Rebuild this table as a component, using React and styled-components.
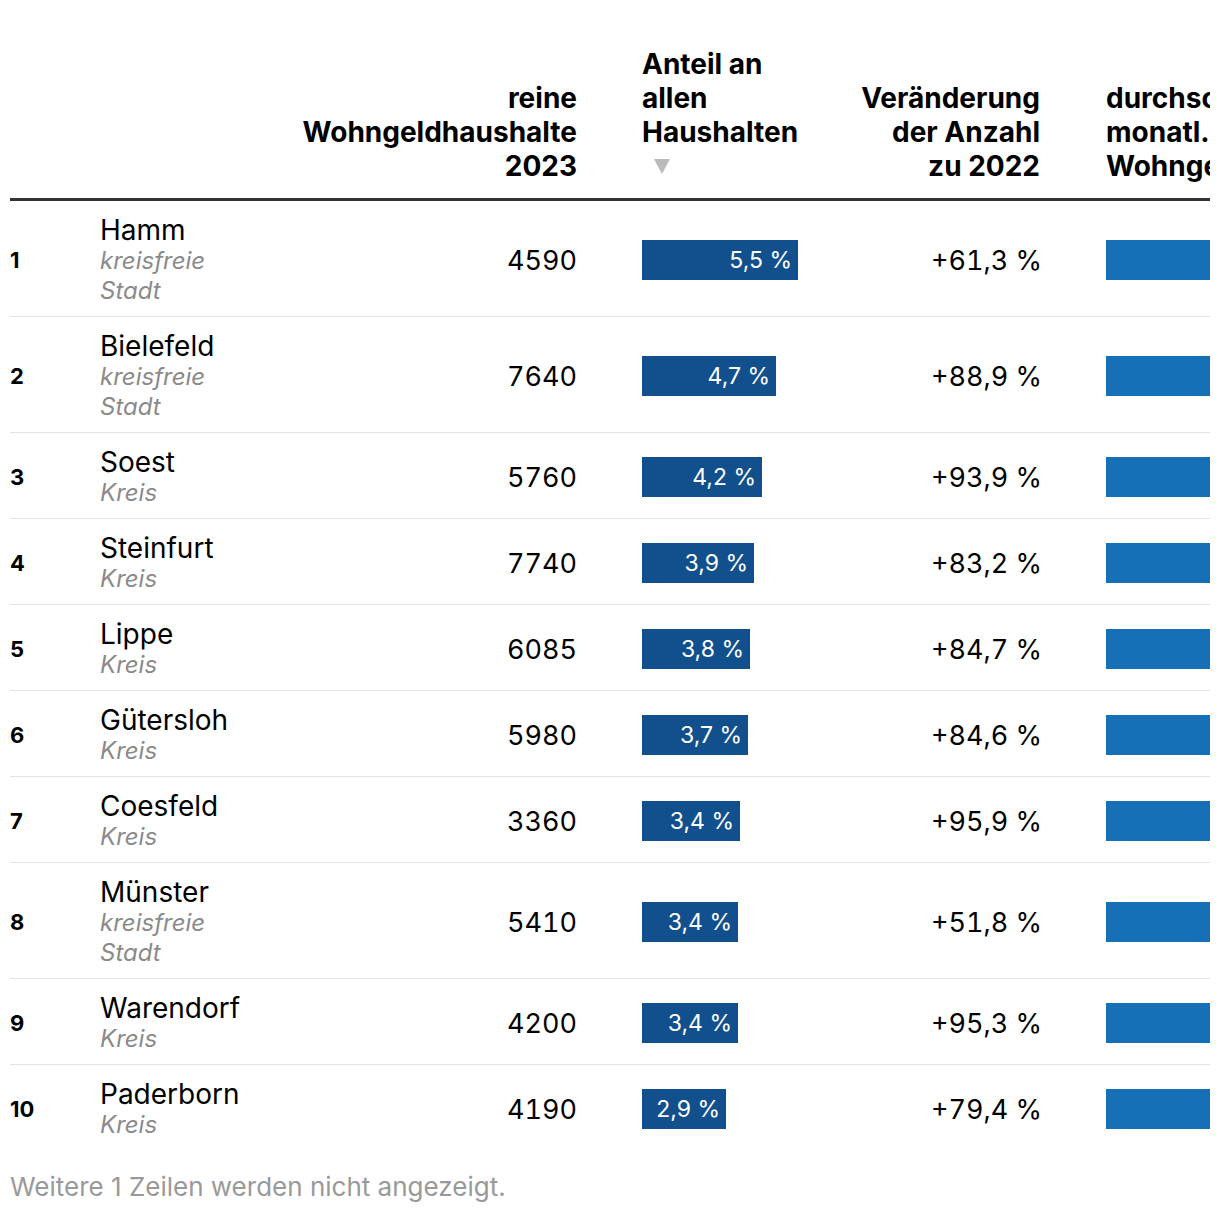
import React from "react"
import styled, { createGlobalStyle } from "styled-components"

const GlobalStyle = createGlobalStyle`
  body {
    margin: 0;
    background: #fff;
    font-family: Inter, "Noto Sans", sans-serif;
    color: #000;
  }
`;

// column template shared by header and rows
const cols = "90px 180px 297px 223px 240px 230px";

const Wrap = styled.div`
  width: 1200px;
  margin: 0 10px;
  padding-top: 47px;
  overflow: hidden;
`;

const Table = styled.div`
  width: 1260px;
`;

const HeadRow = styled.div`
  display: grid;
  grid-template-columns: ${cols};
  align-items: end;
  padding-bottom: 15px;
  border-bottom: 3px solid #333;
`;

const Th = styled.div`
  font-size: 28px;
  font-weight: 700;
  line-height: 34px;
  text-align: ${({align}) => align || "left"};
  padding-left: ${({pl}) => pl || 0}px;
`;

const SortArrow = styled.div`
  height: 34px;
  display: flex;
  align-items: center;
  padding-left: 12px;

  &::before {
    content: "";
    border-left: 8px solid transparent;
    border-right: 8px solid transparent;
    border-top: 15px solid #bbb;
  }
`;

const Row = styled.div`
  display: grid;
  grid-template-columns: ${cols};
  align-items: center;
  padding: 13px 0 10px;
  border-bottom: ${({last}) => last ? "none" : "1px solid #e3e3e3"};
`;

const Rank = styled.div`
  font-size: 22px;
  font-weight: 700;
`;

const Name = styled.div`
  font-size: 28px;
  line-height: 32px;
`;

const Sub = styled.div`
  font-size: 24px;
  line-height: 30px;
  font-style: italic;
  color: #8a8a8a;
`;

const Num = styled.div`
  font-size: 27px;
  text-align: right;
  font-variant-numeric: tabular-nums;
`;

const BarCell = styled.div`
  padding-left: 65px;
`;

const Bar = styled.div`
  height: 40px;
  background: #11508c;
  color: #fff;
  font-size: 23px;
  display: flex;
  align-items: center;
  justify-content: flex-end;
  padding-right: 6px;
  box-sizing: border-box;
`;

const Change = styled(Num)`
  padding-left: 40px;
  margin-right: -2px;
`;

const LastBar = styled.div`
  margin-left: 66px;
  height: 40px;
  background: #1570b8;
`;

const Footer = styled.div`
  margin-top: 21px;
  font-size: 26px;
  line-height: 32px;
  color: #999;
`;

const rows = [
  { name: "Hamm", type: "kreisfreie Stadt", n: "4590", share: "5,5 %", w: 156, change: "+61,3 %" },
  { name: "Bielefeld", type: "kreisfreie Stadt", n: "7640", share: "4,7 %", w: 134, change: "+88,9 %" },
  { name: "Soest", type: "Kreis", n: "5760", share: "4,2 %", w: 120, change: "+93,9 %" },
  { name: "Steinfurt", type: "Kreis", n: "7740", share: "3,9 %", w: 112, change: "+83,2 %" },
  { name: "Lippe", type: "Kreis", n: "6085", share: "3,8 %", w: 108, change: "+84,7 %" },
  { name: "Gütersloh", type: "Kreis", n: "5980", share: "3,7 %", w: 106, change: "+84,6 %" },
  { name: "Coesfeld", type: "Kreis", n: "3360", share: "3,4 %", w: 98, change: "+95,9 %" },
  { name: "Münster", type: "kreisfreie Stadt", n: "5410", share: "3,4 %", w: 96, change: "+51,8 %" },
  { name: "Warendorf", type: "Kreis", n: "4200", share: "3,4 %", w: 96, change: "+95,3 %" },
  { name: "Paderborn", type: "Kreis", n: "4190", share: "2,9 %", w: 84, change: "+79,4 %" },
];

const App = () => {

  return (
    <>
      <GlobalStyle />
      <Wrap>
        <Table>

          <HeadRow>
            <Th />
            <Th />
            <Th align="right">reine<br />Wohngeldhaushalte<br />2023</Th>
            <Th pl={65}>
              Anteil an<br />allen<br />Haushalten
              <SortArrow />
            </Th>
            <Th align="right">Veränderung<br />der Anzahl<br />zu 2022</Th>
            <Th pl={66}>durchschn.<br />monatl.<br />Wohngeld</Th>
          </HeadRow>

          {rows.map((r, i) => (
            <Row key={r.name} last={i === rows.length - 1}>
              <Rank>{i + 1}</Rank>
              <div>
                <Name>{r.name}</Name>
                {r.type === "Kreis"
                  ? <Sub>Kreis</Sub>
                  : <><Sub>kreisfreie</Sub><Sub>Stadt</Sub></>}
              </div>
              <Num>{r.n}</Num>
              <BarCell>
                <Bar style={{ width: r.w }}>{r.share}</Bar>
              </BarCell>
              <Change>{r.change}</Change>
              <LastBar />
            </Row>
          ))}

        </Table>

        <Footer>Weitere 1 Zeilen werden nicht angezeigt.</Footer>
      </Wrap>
    </>
  );
}

export default App
